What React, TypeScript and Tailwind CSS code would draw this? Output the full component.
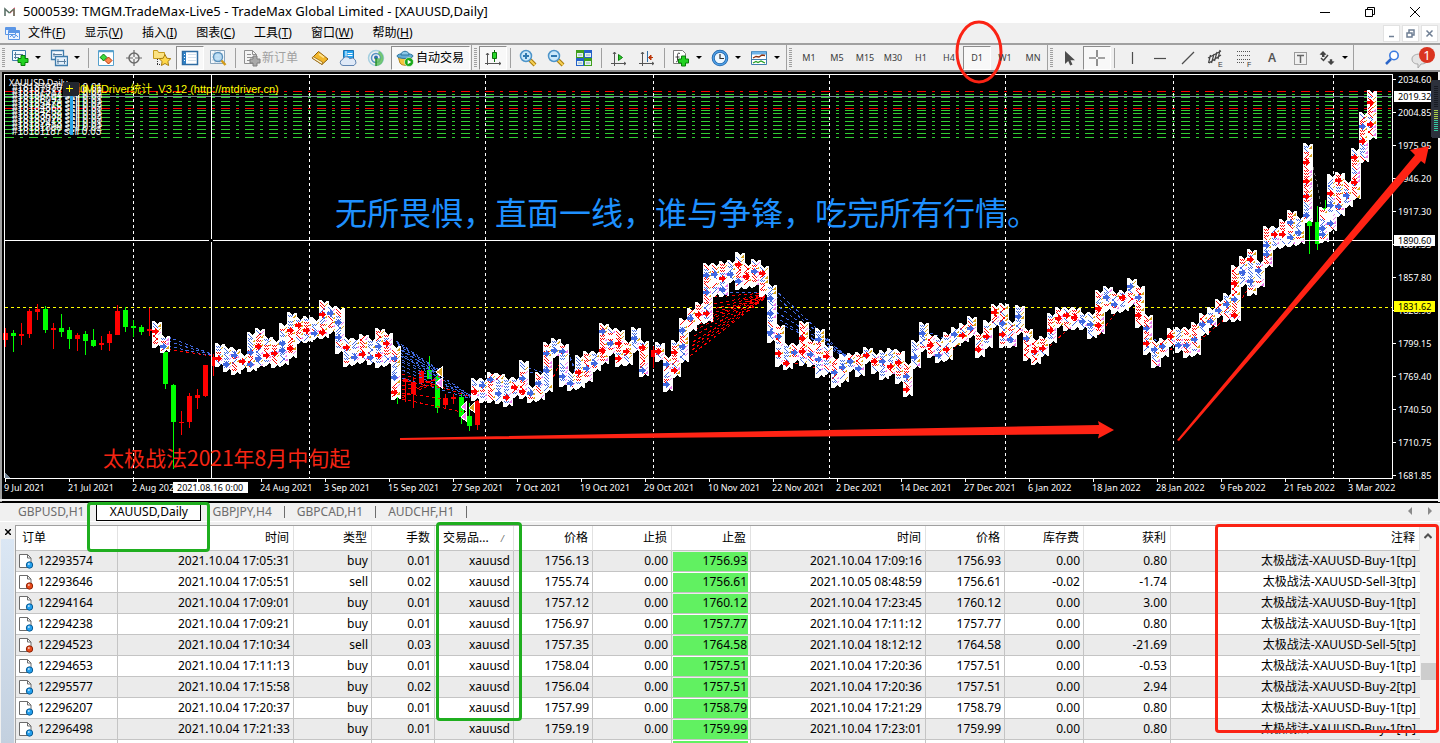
import type { ReactNode } from "react";

const FONT = "font-['Noto_Sans','Noto_Sans_CJK_SC',sans-serif]";

/* ---------- toolbar icons ---------- */

const Icon: React.FC<{ children: ReactNode }> = ({ children }) => (
  <svg width="18" height="18" viewBox="0 0 18 18" fill="none" className="shrink-0">
    {children}
  </svg>
);

const Plus: React.FC<{ x: number; y: number; fill?: string; line?: string }> = ({
  x,
  y,
  fill = "#22d322",
  line = "#0a7d0a",
}) => (
  <path
    d={`M${x + 3} ${y}h4v3h3v4h-3v3h-4v-3h-3v-4h3z`}
    fill={fill}
    stroke={line}
  />
);

const NewChartIcon = () => (
  <Icon>
    <path d="M1.5 1.500h13v10h-13z" fill="#f4f9ff" stroke="#3f7cac" />
    <path d="M4.5 3v7M3 5.500h9M3 8.500h5" stroke="#5b7f9f" />
    <Plus x={7} y={6.5} />
  </Icon>
);

const ProfilesIcon = () => (
  <Icon>
    <path d="M1.5 1.500h12v9h-12z" fill="#f4f9ff" stroke="#3f7cac" strokeWidth="1.300" />
    <path d="M5.500 7.500h12v9h-12z" fill="#e6f1fb" stroke="#3f7cac" strokeWidth="1.300" />
    <path d="M4 4v4M3 5.500h9M8 10v5M7 12.500h9M14.500 10v5" stroke="#5b7f9f" />
  </Icon>
);

const MarketIcon = () => (
  <Icon>
    <path d="M1.500 1.500h15v15h-15z" fill="#fff" stroke="#56a0cc" />
    <path d="M2 2.500h14" stroke="#56a0cc" strokeWidth="1.500" />
    <path d="M3 8.500l3.500-3.500 3.500 3.500-1.500 1.500-2 2-1.500-2z" fill="#3ddc3d" stroke="#0b7a0b" />
    <path d="M8 11.500l1.500-1.500 2-2 2 2 1.500 1.500-3.500 3.500z" fill="#ff8a4d" stroke="#b93205" />
  </Icon>
);

const CrosshairIcon = () => (
  <Icon>
    <circle cx="9" cy="9" r="5" stroke="#6a6a6a" strokeWidth="1.500" />
    <path d="M9 1v7M9 10v7M1 9h7M10 9h7" stroke="#6a6a6a" strokeWidth="1.200" />
  </Icon>
);

const FavoritesIcon = () => (
  <Icon>
    <path d="M.5 1.500h4l1 2h6v6H.5z" fill="#fbe281" stroke="#c39a1e" />
    <path d="M4.500 10v6M4 15.500h4" stroke="#333" strokeDasharray="1 1" />
    <path
      d="M12 5.500l1.800 3.700 4 .5-2.900 2.800.7 4-3.600-2-3.600 2 .7-4-2.900-2.800 4-.5z"
      fill="#ffd84a"
      stroke="#a87d10"
    />
  </Icon>
);

const TerminalIcon = () => (
  <Icon>
    <path d="M1.500 2.500h15v13h-15z" fill="#fff" stroke="#2f6ca3" strokeWidth="1.500" />
    <path d="M2 3h3v12H2z" fill="#2f7fc4" />
    <path d="M7 5.500h8M7 8.500h8M7 11.500h8" stroke="#d5e2ee" />
    <path d="M3 5.500h1M3 8.500h1M3 11.500h1" stroke="#fff" />
  </Icon>
);

const TesterIcon = () => (
  <Icon>
    <path d="M1.500 1.500h14v13h-14z" fill="#f3f8fc" stroke="#8ba5bb" />
    <path d="M3 5h11M3 8h10M3 11h10M6 2v12M11 2v12" stroke="#bccbd7" />
    <circle cx="9" cy="8" r="4.500" fill="#b5dcf6" fillOpacity=".8" stroke="#5a91bc" strokeWidth="1.400" />
    <path d="M12.500 11.500l4 4.500" stroke="#d29b1b" strokeWidth="2.500" />
  </Icon>
);

const OrderIcon = () => (
  <Icon>
    <path d="M1.500 1.500h8l4 4v9h-12z" fill="#f4f4f4" stroke="#8f8f8f" />
    <path d="M9.500 1.500v4h4M4 5.500h4M4 8.500h6M4 11.500h4" stroke="#8f8f8f" />
    <Plus x={7} y={7} fill="#a9a9a9" line="#7f7f7f" />
  </Icon>
);

const BookIcon = () => (
  <Icon>
    <path d="M7.500 2.500l9.500 7.500-6 5.500-10-6.500z" fill="#f2b72c" stroke="#8f5d09" />
    <path d="M1 9l10 6.500.5-2.500L2 7.500z" fill="#fff2c4" stroke="#8f5d09" strokeWidth=".7" />
    <path d="M8 5l5 3.500" stroke="#ffe28a" strokeWidth="2" />
  </Icon>
);

const VpsIcon = () => (
  <Icon>
    <path d="M4.500 1.500h10v10h-10z" fill="#29a3ee" stroke="#1674b5" />
    <path d="M7 2v8M8.500 4.500h5M8.500 6.500h5" stroke="#fff" />
    <path
      d="M4 16.500a3 3 0 01-.5-5.900 4 4 0 017.300-.9 3.400 3.400 0 014.200 6.800z"
      fill="#dfe9f7"
      stroke="#5f83b0"
    />
  </Icon>
);

const SignalIcon = () => (
  <Icon>
    <circle cx="9" cy="9" r="7.500" stroke="#a3cfe0" strokeWidth="1.500" />
    <circle cx="9" cy="9" r="4.500" stroke="#5694c4" strokeWidth="1.500" />
    <path d="M9 9v8c4 0 7.500-3 7.500-8 0-3-2-6-4.500-7l-1 2.500c2 1 3 3 2.500 5z" fill="#5fbf5f" fillOpacity=".85" />
    <circle cx="9" cy="8.500" r="2" fill="#2e6fae" />
    <path d="M9 9v8" stroke="#2b8f2b" strokeWidth="1.500" />
  </Icon>
);

const AutoTradeIcon = () => (
  <Icon>
    <path d="M2 7l2 7c2 3 8 3 10 0l2-7z" fill="#f3c53c" stroke="#b5851a" />
    <ellipse cx="9" cy="7" rx="8" ry="2.500" fill="#63acd6" stroke="#2e769f" />
    <path d="M5 6c0-5 8-5 8 0z" fill="#8cc8ea" stroke="#2e769f" />
    <circle cx="13" cy="13" r="4.500" fill="#18a818" stroke="#fff" strokeWidth=".6" />
    <path d="M11.700 10.800v4.400l3.600-2.200z" fill="#fff" />
  </Icon>
);

const CandleIcon = () => (
  <Icon>
    <path d="M3.500 4v12M1 14.500h16M2 6l1.500-2L5 6M15 13l2 1.500-2 1.500" stroke="#555" />
    <path d="M10.500 1v12" stroke="#0b6f0b" />
    <path d="M8.500 3.500h4v6h-4z" fill="#28d728" stroke="#0b6f0b" />
  </Icon>
);

const ZoomIcon: React.FC<{ plus?: boolean }> = ({ plus }) => (
  <Icon>
    <path d="M11 11l5 5" stroke="#a97b0d" strokeWidth="4" />
    <path d="M11 11l5 5" stroke="#f7d154" strokeWidth="2" />
    <circle cx="7" cy="7" r="5.500" fill="#cbe8fa" stroke="#4d94c9" strokeWidth="1.500" />
    <path d={plus ? "M4 7h6M7 4v6" : "M4 7h6"} stroke="#2f78b0" strokeWidth="2" />
  </Icon>
);

const TileIcon = () => (
  <Icon>
    <path d="M1 1h8v8H1zM9 9h8v8H9z" fill="#3f9f1d" />
    <path d="M9 1h8v8H9z" fill="#2461c9" />
    <path d="M1 9h8v8H1z" fill="#2461c9" />
    <path d="M2 4h6v4H2zM10 4h6v4h-6zM2 12h6v4H2zM10 12h6v4h-6z" fill="#e6f1ee" />
    <path d="M3 6h4M11 6h4M3 14h4M11 14h4" stroke="#8fb0c8" />
  </Icon>
);

const AutoScrollIcon = () => (
  <Icon>
    <path d="M4.500 3v14M1 14.500h15M3 5l1.500-2L6 5M14 13l2 1.500-2 1.500" stroke="#555" />
    <path d="M8.500 5.500l4 3-4 3z" fill="#28c828" stroke="#0b7f0b" />
  </Icon>
);

const ShiftIcon = () => (
  <Icon>
    <path d="M4.500 3v14M1 14.500h15M3 5l1.500-2L6 5M14 13l2 1.500-2 1.500" stroke="#555" />
    <path d="M9.500 2v11" stroke="#2f6ca3" />
    <path d="M15 8.500h-4M13 6l-2.500 2.500L13 11z" fill="#d2461a" stroke="#b93205" />
  </Icon>
);

const IndicatorIcon = () => (
  <Icon>
    <path d="M1.500 1.500h9l3 3v10h-12z" fill="#fff" stroke="#7d7d7d" />
    <path d="M8 4.500c-2-1-2.500 0-2.500 2v5c0 1-.5 1.500-1.500 1M3.500 8h4" stroke="#444" />
    <Plus x={6.5} y={7} />
  </Icon>
);

const ClockIcon = () => (
  <Icon>
    <circle cx="9" cy="9" r="6.800" fill="#eef7fe" stroke="#1e62a8" strokeWidth="3" />
    <circle cx="9" cy="9" r="6.800" stroke="#4f9fe4" strokeWidth="1.500" />
    <path d="M9 5v4.500h4" stroke="#333" strokeWidth="1.200" />
  </Icon>
);

const TemplateIcon = () => (
  <Icon>
    <path d="M1.500 2.500h15v13h-15z" fill="#fff" stroke="#3f7cac" />
    <path d="M2 4h14" stroke="#6db3e8" strokeWidth="3" />
    <path d="M3 9l3-1.500 3 .5 3-2 3 .5" stroke="#8b2f0d" strokeWidth="1.300" />
    <path d="M2 10.500h14" stroke="#3f7cac" />
    <path d="M3 14l3-1.500 2 1 3-1.500 4 2" stroke="#26a226" strokeWidth="1.300" />
  </Icon>
);

const CursorIcon = () => (
  <Icon>
    <path d="M5 2v13l3.200-3 2 4.500 2.300-1-2-4.300H15z" fill="#4d4d4d" />
  </Icon>
);

const LineIcon: React.FC<{ d: string }> = ({ d }) => (
  <Icon>
    <path d={d} stroke="#4d4d4d" strokeWidth="1.200" />
  </Icon>
);

const ChannelIcon = () => (
  <Icon>
    <path
      d="M1 9L14 2M2 14l12-8M3.500 6l-2 8M7 5l-2.500 9M10 3L7.500 12M13 1l-2 9"
      stroke="#444"
      strokeWidth="1.200"
    />
    <text x="11" y="18" fontSize="7" fill="#333" className="font-['Liberation_Sans',sans-serif]">E</text>
  </Icon>
);

const FiboIcon = () => (
  <Icon>
    <path d="M2 2.500h14M2 6.500h14M2 10.500h14M2 13.500h8" stroke="#555" strokeDasharray="1 1" />
    <text x="12" y="18" fontSize="7" fill="#333" className="font-['Liberation_Sans',sans-serif]">F</text>
  </Icon>
);

const LabelIcon = () => (
  <Icon>
    <path d="M3.500 3.500h12v12h-12z" stroke="#444" strokeDasharray="1 1" />
    <path d="M6 6.500h7M9.500 6v8" stroke="#666" strokeWidth="1.500" />
  </Icon>
);

const ShapesIcon = () => (
  <Icon>
    <path d="M5 2l3.500 3.500L6.500 6v2H4V6L1.500 5.500zM13 16l-3.500-3.500 2.300-.3v-2h2.400v2l2.300.3z" fill="#444" />
    <path d="M3 9l2.500 2.500L10 6" stroke="#444" strokeWidth="1.500" />
  </Icon>
);

const SearchIcon = () => (
  <Icon>
    <path d="M8 10l-5 5" stroke="#2b66c9" strokeWidth="2.500" />
    <circle cx="11" cy="6.500" r="4.200" fill="#fff" stroke="#3c7be0" strokeWidth="1.600" />
  </Icon>
);

/* ---------- toolbar parts ---------- */

const Tool: React.FC<{ label: string; pressed?: boolean; children: ReactNode }> = ({
  label,
  pressed,
  children,
}) => (
  <button
    aria-label={label}
    className={`relative flex h-6 w-7 shrink-0 items-center justify-center text-[9px] text-[#3c3c3c] ${
      pressed ? "border border-t-[#8c8c8c] border-r-white border-b-white border-l-[#8c8c8c] bg-[#f8f8f8]" : ""
    }`}
  >
    {children}
  </button>
);

const DropTool: React.FC<{ label: string; children: ReactNode }> = ({ label, children }) => (
  <button aria-label={label} className="flex h-6 w-[39px] shrink-0 items-center gap-1.5 pl-1">
    {children}
    <span className="h-0 w-0 border-x-3 border-t-3 border-x-transparent border-t-black" />
  </button>
);

const Separator = () => (
  <span className="mx-[3px] h-5 w-px shrink-0 bg-[#a0a0a0]" />
);

const Grip = () => (
  <span className="mx-[2px] h-5 w-[3px] shrink-0 bg-[repeating-linear-gradient(#a0a0a0_0_1px,#f0f0f0_1px_2px)]" />
);

const BarEnd = () => <span className="h-full w-px shrink-0 bg-[#a0a0a0]" />;

const TIMEFRAMES = ["M1", "M5", "M15", "M30", "H1", "H4", "D1", "W1", "MN"];

const Toolbar = () => (
  <div className="relative z-20 flex h-[29px] shrink-0 items-center border-y-2 border-t-[#a0a0a0] border-b-[#8a8a8a] bg-[#f0f0f0]">
    <Grip />
    <DropTool label="New chart"><NewChartIcon /></DropTool>
    <DropTool label="Profiles"><ProfilesIcon /></DropTool>
    <Separator />
    <Tool label="Market watch"><MarketIcon /></Tool>
    <Tool label="Data window"><CrosshairIcon /></Tool>
    <Tool label="Navigator"><FavoritesIcon /></Tool>
    <Tool label="Terminal" pressed><TerminalIcon /></Tool>
    <Tool label="Strategy tester"><TesterIcon /></Tool>
    <Separator />
    <button className="flex h-6 w-[67px] shrink-0 items-center gap-px pl-1 text-xs whitespace-nowrap text-[#a0a0a0]">
      <OrderIcon />
      新订单
    </button>
    <Tool label="MetaEditor"><BookIcon /></Tool>
    <Tool label="VPS"><VpsIcon /></Tool>
    <Tool label="Signals"><SignalIcon /></Tool>
    <button className="mx-px flex h-6 w-[79px] shrink-0 items-center gap-0.5 border border-t-[#8c8c8c] border-r-white border-b-white border-l-[#8c8c8c] bg-[#f8f8f8] pl-1 text-xs whitespace-nowrap text-black">
      <AutoTradeIcon />
      自动交易
    </button>
    <BarEnd />
    <Grip />
    <Tool label="Candlesticks" pressed><CandleIcon /></Tool>
    <Separator />
    <Tool label="Zoom in"><ZoomIcon plus /></Tool>
    <Tool label="Zoom out"><ZoomIcon /></Tool>
    <Tool label="Tile windows"><TileIcon /></Tool>
    <Separator />
    <Tool label="Auto scroll"><AutoScrollIcon /></Tool>
    <Tool label="Chart shift"><ShiftIcon /></Tool>
    <Separator />
    <DropTool label="Indicators"><IndicatorIcon /></DropTool>
    <DropTool label="Periods"><ClockIcon /></DropTool>
    <DropTool label="Templates"><TemplateIcon /></DropTool>
    <span className="w-px shrink-0" />
    <BarEnd />
    <Grip />
    <span className="w-px shrink-0" />
    {TIMEFRAMES.map((t) => (
      <Tool key={t} label={t} pressed={t === "D1"}>
        {t}
        {t === "D1" && (
          <svg
            width="50"
            height="66"
            viewBox="0 0 50 66"
            className="pointer-events-none absolute -top-7 -left-2.5 max-w-none"
          >
            <ellipse cx="25" cy="33" rx="22" ry="30" fill="none" stroke="#fb2314" strokeWidth="3" />
          </svg>
        )}
      </Tool>
    ))}
    <BarEnd />
    <Grip />
    <Tool label="Cursor"><CursorIcon /></Tool>
    <Tool label="Crosshair" pressed><LineIcon d="M9 1v7M9 10v7M1 9h7M10 9h7" /></Tool>
    <Separator />
    <Tool label="Vertical line"><LineIcon d="M9.500 3v12" /></Tool>
    <Tool label="Horizontal line"><LineIcon d="M3 9.500h12" /></Tool>
    <Tool label="Trendline"><LineIcon d="M3 15L15 3" /></Tool>
    <Tool label="Equidistant channel"><ChannelIcon /></Tool>
    <Tool label="Fibonacci"><FiboIcon /></Tool>
    <Tool label="Text"><span className="text-xs font-semibold text-[#555]">A</span></Tool>
    <Tool label="Text label"><LabelIcon /></Tool>
    <DropTool label="Arrows"><ShapesIcon /></DropTool>
    <BarEnd />
    <button aria-label="Search" className="ml-auto flex h-6 w-7 shrink-0 items-center justify-center">
      <SearchIcon />
    </button>
    <button aria-label="Notifications" className="mr-1 ml-1 shrink-0">
      <svg width="26" height="22" viewBox="0 0 26 22">
        <path d="M2 12c0-3 3-5 8-5s8 2 8 5-3 5-7 5l-3 4v-4c-4 0-6-2-6-5z" fill="#e4e4e4" stroke="#a8a8a8" />
        <circle cx="17" cy="8" r="8" fill="#da3420" />
        <text x="17" y="13" fontSize="13" fill="#fff" textAnchor="middle">1</text>
      </svg>
    </button>
  </div>
);

/* ---------- title and menu ---------- */

const MENU = [
  ["文件", "F"],
  ["显示", "V"],
  ["插入", "I"],
  ["图表", "C"],
  ["工具", "T"],
  ["窗口", "W"],
  ["帮助", "H"],
];

const TitleBar = () => (
  <header className="flex h-[23px] shrink-0 items-center bg-white pl-1 text-[13px] text-black">
    <svg width="11" height="10" viewBox="0 0 11 10" className="mr-2 shrink-0" fill="none">
      <path d="M1 9V2l4.500 4" stroke="#5c7168" strokeWidth="1.600" />
      <path d="M10 9V2L5.500 6" stroke="#b8324a" strokeWidth="1.600" />
      <path d="M5 6l5-4v7" stroke="#3f9a68" strokeWidth="1" />
    </svg>
    <h1 className="grow whitespace-nowrap">
      5000539: TMGM.TradeMax-Live5 - TradeMax Global Limited - [XAUUSD,Daily]
    </h1>
    <div className="flex gap-[35px] pr-5">
      <button aria-label="Minimize">
        <svg width="10" height="10"><path d="M0 5.500h10" stroke="#000" /></svg>
      </button>
      <button aria-label="Restore">
        <svg width="10" height="10" fill="none" stroke="#000">
          <path d="M.5 2.500h7v7h-7zM2.500 2.500v-2h7v7h-2" />
        </svg>
      </button>
      <button aria-label="Close">
        <svg width="10" height="10" stroke="#000"><path d="M0 0l10 10M10 0L0 10" /></svg>
      </button>
    </div>
  </header>
);

const MdiButton: React.FC<{ label: string; d: string }> = ({ label, d }) => (
  <button aria-label={label} className="flex h-[17px] w-[17px] items-center justify-center border border-[#e2e2e2] bg-white">
    <svg width="9" height="9" viewBox="0 0 9 9" fill="none" stroke="#6f7f94" strokeWidth="1.500">
      <path d={d} />
    </svg>
  </button>
);

const MenuBar = () => (
  <nav className="flex h-5 shrink-0 items-center bg-[#f0f0f0] pl-[5px] text-xs text-black">
    <svg width="15" height="14" viewBox="0 0 15 14" fill="none" className="mr-2 shrink-0" stroke="#5b96e6">
      <path d="M.5 1.500h10v7h-10zM3.500 4.500h11v9h-11z" fill="#eef5ff" />
      <path d="M1 3h9M4 6h10" strokeWidth="2" />
      <path d="M5 11l2-2 2 3 2-3 2 2" />
    </svg>
    <div className="flex grow gap-[19px]">
      {MENU.map(([name, key]) => (
        <button key={key} className="whitespace-nowrap">
          {name}(<u>{key}</u>)
        </button>
      ))}
    </div>
    <div className="flex gap-0.5 pr-0.5">
      <MdiButton label="Minimize chart" d="M2 7.500h5" />
      <MdiButton label="Restore chart" d="M1 4h5v4H1zM3 4V1h5v5H6" />
      <MdiButton label="Close chart" d="M1.500 1.500l6 6M7.500 1.500l-6 6" />
    </div>
  </nav>
);

/* ---------- chart ---------- */

const RED = "#ff0000";
const LIME = "#00ff00";
const ARROW_BLUE = "#4169e1";

// x, high, low, body top, body bottom, colour
const CANDLES: [number, number, number, number, number, string][] = [
  [5, 328, 347, 333, 340, RED],
  [13, 330, 352, 333, 336, LIME],
  [21, 323, 345, 334, 336, RED],
  [29, 309, 338, 311, 334, RED],
  [37, 304, 320, 309, 312, RED],
  [45, 306, 333, 309, 330, LIME],
  [53, 323, 349, 328, 330, RED],
  [61, 314, 337, 328, 332, LIME],
  [69, 327, 349, 330, 339, LIME],
  [77, 333, 351, 335, 339, RED],
  [85, 331, 355, 334, 341, LIME],
  [93, 329, 347, 340, 346, LIME],
  [101, 336, 350, 343, 345, RED],
  [109, 331, 351, 334, 343, RED],
  [117, 305, 335, 311, 335, RED],
  [125, 307, 332, 310, 327, LIME],
  [133, 320, 337, 326, 328, LIME],
  [141, 325, 335, 327, 332, LIME],
  [149, 308, 336, 329, 331, RED],
  [165, 352, 389, 352, 384, LIME],
  [173, 384, 469, 385, 422, LIME],
  [181, 411, 435, 422, 423, RED],
  [189, 393, 428, 396, 422, RED],
  [197, 389, 409, 395, 398, RED],
  [205, 365, 397, 365, 396, RED],
  [213, 354, 376, 357, 366, RED],
  [397, 395, 404, 396, 398, LIME],
  [405, 378, 402, 379, 382, RED],
  [413, 378, 408, 382, 394, RED],
  [421, 370, 384, 371, 383, RED],
  [429, 356, 379, 370, 379, LIME],
  [437, 368, 413, 377, 408, LIME],
  [445, 394, 409, 398, 405, RED],
  [453, 394, 404, 397, 399, RED],
  [461, 394, 424, 397, 417, LIME],
  [469, 403, 431, 416, 426, LIME],
  [477, 400, 430, 401, 425, RED],
  [653, 346, 368, 350, 357, RED],
  [1309, 220, 254, 221, 226, LIME],
  [1317, 206, 250, 222, 244, LIME],
  [1325, 200, 212, 208, 210, LIME],
];

// runs of trade-marker columns, 8 units apart: start x, then top / bottom of each
const MARKER_RUNS: { x: number; cols: [number, number][] }[] = [
  { x: 152, cols: [[321, 348], [335, 353]] },
  {
    x: 215,
    cols: [
      [343, 367], [346, 372], [348, 375], [353, 370], [332, 372], [328, 368], [336, 366], [339, 368],
      [323, 366], [312, 359], [317, 344], [316, 343], [318, 340], [300, 339], [305, 334], [307, 354],
      [337, 367], [338, 365], [334, 363], [338, 365], [328, 368], [332, 366], [345, 400],
    ],
  },
  {
    x: 471,
    cols: [
      [378, 401], [378, 403], [372, 403], [373, 404], [377, 407], [377, 398], [360, 399], [385, 403],
      [372, 401], [342, 393], [338, 358], [343, 387], [371, 391], [355, 389], [351, 383], [351, 372],
      [323, 365], [327, 356], [329, 367], [340, 366], [327, 353], [340, 377],
    ],
  },
  {
    x: 655,
    cols: [
      [342, 362], [355, 392], [340, 378], [318, 363], [308, 332], [302, 325], [263, 323], [263, 297],
      [261, 297], [260, 283], [252, 290], [263, 289], [259, 287], [265, 297], [284, 343], [324, 367],
      [343, 370], [343, 363], [321, 366], [339, 367], [328, 378], [345, 375], [357, 388], [354, 383],
      [353, 372], [352, 377], [347, 364], [352, 374], [350, 380], [348, 376], [350, 384], [362, 397],
      [340, 369], [322, 352], [334, 358], [337, 363], [332, 361], [327, 347], [323, 343], [316, 338],
      [332, 358], [320, 349], [304, 328], [303, 348], [320, 348], [305, 335], [328, 361], [338, 365],
      [336, 357], [313, 344], [307, 328], [307, 331], [307, 330], [312, 330], [312, 339], [290, 335],
      [286, 312], [291, 314], [290, 312], [278, 307], [285, 328], [314, 355], [340, 368], [338, 358],
      [328, 347], [327, 353], [327, 358], [322, 356], [313, 336], [307, 328], [299, 318], [293, 322],
      [265, 322], [256, 287], [249, 296], [260, 288], [226, 268], [226, 250], [219, 248], [210, 247],
      [216, 245], [143, 223],
    ],
  },
  { x: 1319, cols: [[207, 243], [174, 232], [172, 217], [180, 208], [148, 200], [112, 163], [90, 140]] },
];

const random = (seed: number) => {
  let s = seed;
  return () => {
    s = (s * 1103515245 + 12345) % 2147483648;
    return s / 2147483648;
  };
};

const dot = (x: number, y: number) => `M${x} ${y}h1v1h-1z`;

const arrow = (x: number, y: number) =>
  `M${x} ${y + 2}h3v-2h1v1h1v1h1v1h1v1h-1v1h-1v1h-1v1h-1v-2h-3z`;

const MarkerColumn: React.FC<{ x: number; top: number; bottom: number }> = ({ x, top, bottom }) => {
  const rnd = random(x * 131 + top * 17 + 7);
  const paths = { blue: "", red: "", gold: "", violet: "" };
  let tone: "blue" | "red" = rnd() > 0.45 ? "blue" : "red";
  for (let y = top + 3; y < bottom - 5; y += 3) {
    if (rnd() > 0.7) tone = tone === "blue" ? "red" : "blue";
    const kind = rnd();
    for (let j = 0; j < 5; j++) {
      if (kind < 0.45) paths[tone] += dot(x + 1 + j, y + (j % 2));
      else if (kind < 0.75) paths[tone] += dot(x + 1 + j, y + j - 1);
      else if (kind < 0.93) paths[tone] += dot(x + 1 + j, y + 3 - j);
    }
  }
  for (let y = top + 3; y < bottom - 4; y += 4) {
    const side = rnd() > (y - top) / (bottom - top) ? "gold" : "violet";
    if (rnd() > 0.3) {
      paths[side] += dot(x + 6, y + 2) + dot(x + 7, y + 1) + dot(x + 8, y);
      if (rnd() > 0.5) paths[side] += dot(x + 7, y + 2) + dot(x + 8, y + 1) + dot(x + 8, y + 2);
    }
  }
  const marks: { d: string; fill: string }[] = [];
  for (let y = top + 4; y < bottom - 10; y += 20) {
    const room = Math.min(14, bottom - 10 - y);
    marks.push({
      d: arrow(x, Math.round(y + rnd() * room)),
      fill: rnd() > 0.5 ? ARROW_BLUE : RED,
    });
  }
  return (
    <>
      <path d={`M${x} ${top}h2l3 3 2-2h3V${bottom - 1}h-2l-2-2-3 3h-3z`} fill="#fff" />
      <path d={paths.blue} fill={ARROW_BLUE} />
      <path d={paths.red} fill={RED} />
      <path d={paths.gold} fill="#daa520" />
      <path d={paths.violet} fill="#ee82ee" />
      {marks.map((m) => (
        <path key={m.d} d={m.d} fill={m.fill} />
      ))}
    </>
  );
};

// dashed order connections: x1, y1, x2, y2
const BLUE_LINKS = [
  [168, 337, 211, 354], [168, 341, 211, 355], [168, 346, 211, 356],
  [396, 341, 442, 372], [397, 343, 442, 373], [398, 345, 442, 374], [400, 350, 440, 374],
  [400, 353, 440, 376], [400, 356, 440, 374], [402, 360, 440, 378],
  [402, 350, 471, 396], [402, 356, 471, 396], [402, 362, 471, 397], [402, 366, 471, 397],
  [402, 370, 470, 398], [402, 378, 471, 399],
  [528, 368, 548, 374], [530, 372, 548, 378], [568, 352, 578, 376], [570, 358, 578, 380],
  [770, 285, 850, 360], [775, 296, 850, 360], [775, 304, 850, 360], [776, 312, 850, 358],
  [780, 320, 850, 360], [785, 326, 848, 356],
  [712, 293, 765, 292], [930, 333, 943, 338], [1150, 335, 1162, 346],
];

const RED_LINKS = [
  [168, 349, 211, 356], [402, 398, 440, 376], [402, 386, 436, 380], [402, 390, 438, 384],
  [402, 380, 440, 388], [402, 393, 450, 400], [402, 396, 445, 380],
  [402, 399, 462, 412], [402, 374, 471, 397], [551, 382, 565, 352],
  [690, 356, 765, 298], [692, 350, 765, 298], [692, 346, 765, 297], [693, 342, 765, 297],
  [694, 336, 765, 296], [695, 330, 765, 296], [700, 324, 765, 295], [703, 320, 765, 295],
  [705, 316, 765, 295], [710, 310, 765, 294],
  [714, 304, 765, 294], [714, 297, 765, 293], [795, 363, 826, 370], [943, 360, 962, 340],
  [1050, 346, 1066, 331], [1099, 335, 1116, 312], [1167, 355, 1182, 335], [1199, 341, 1226, 318],
  [1236, 308, 1250, 286],
];

const GRID_X = [133, 309, 485, 653, 829, 1005, 1173, 1333];
const ORDER_Y = [94, 97, 101, 105, 110, 113, 117, 121, 125, 129, 133, 137];

const PRICES = [
  "2034.60", "2004.85", "1975.95", "1946.20", "1917.30", "1887.55", "1857.80",
  "1828.90", "1799.15", "1769.40", "1740.50", "1710.75", "1681.85",
];

const DATES = [
  "9 Jul 2021", "21 Jul 2021", "2 Aug 2021", "12 Aug 2021", "24 Aug 2021", "3 Sep 2021",
  "15 Sep 2021", "27 Sep 2021", "7 Oct 2021", "19 Oct 2021", "29 Oct 2021", "10 Nov 2021",
  "22 Nov 2021", "2 Dec 2021", "14 Dec 2021", "27 Dec 2021", "6 Jan 2022", "18 Jan 2022",
  "28 Jan 2022", "9 Feb 2022", "21 Feb 2022", "3 Mar 2022",
];

const PriceTag: React.FC<{ y: number; fill: string; text: string }> = ({ y, fill, text }) => (
  <>
    <rect x="1394" y={y} width="41" height="11" fill={fill} />
    <text x="1398" y={y + 9} fill="#000">{text}</text>
  </>
);

// user units equal window coordinates at the default width
const Chart = () => (
  <svg
    viewBox="0 72 1440 430"
    className="block w-full shrink-0 bg-black"
    fontSize="9"
    shapeRendering="crispEdges"
    role="img"
    aria-label="XAUUSD daily chart"
  >
    <path d="M0 72h2v430H0z" fill="#a0a0a0" />
    <path d="M1438 72h2v430h-2zM0 499h1440v2H0z" fill="#f0f0f0" />

    {ORDER_Y.map((y) => (
      <path key={y} d={`M5 ${y + 0.5}H1392`} stroke="#32cd32" strokeDasharray="9 6 3 6" />
    ))}
    <path d="M5 91.500H1392M5 108.500H1392" stroke={RED} strokeDasharray="9 6 3 6" />
    <path d="M5 96.500H1392" stroke="#778899" />

    {GRID_X.map((x) => (
      <path key={x} d={`M${x + 0.5} 75V478`} stroke="#fff" strokeDasharray="3 3" />
    ))}
    <path d="M5 307.500H1392" stroke="#ffff00" strokeDasharray="3 3" />

    {CANDLES.map(([x, high, low, top, bottom, color]) => (
      <g key={x} fill={color}>
        <rect x={x} y={high} width="1" height={low - high} />
        <rect x={x - 2} y={top} width="5" height={bottom - top} />
      </g>
    ))}

    <g strokeDasharray="3 3">
      {BLUE_LINKS.map(([x1, y1, x2, y2]) => (
        <path key={`${x1}-${y1}-${y2}`} d={`M${x1} ${y1}L${x2} ${y2}`} stroke={ARROW_BLUE} />
      ))}
      {RED_LINKS.map(([x1, y1, x2, y2]) => (
        <path key={`${x1}-${y1}-${y2}`} d={`M${x1} ${y1}L${x2} ${y2}`} stroke={RED} />
      ))}
      <path d="M1311 155L1321 204" stroke="#696969" />
    </g>

    {MARKER_RUNS.map((run) =>
      run.cols.map(([top, bottom], i) => (
        <MarkerColumn key={run.x + i * 8} x={run.x + i * 8} top={top} bottom={bottom} />
      )),
    )}
    <path d="M442 367v10l-6-5zM474 403v9l-5-4z" fill="#daa520" stroke="#fff" />
    <path d="M442 378v10l-6-5zM466 402v9l-5-4zM466 412v9l-5-4z" fill="#ee82ee" stroke="#fff" />

    <path d="M4.500 478V74.500H1392.500V478.500H4.500" fill="none" stroke="#fff" />
    <path d="M5 240.500H1392M211.500 75V478" stroke="#fff" />
    <rect x="209" y="239" width="4" height="3" fill="#000" />
    <path d="M5 473l6 5H5z" fill="#778899" />

    {PRICES.map((p, i) => (
      <g key={p}>
        <path d={`M1393 ${79.5 + i * 33}h3`} stroke="#fff" />
        <text x="1398" y={83 + i * 33} fill="#fff">{p}</text>
      </g>
    ))}
    <PriceTag y={91} fill="#fff" text="2019.32" />
    <PriceTag y={235} fill="#fff" text="1890.60" />
    <PriceTag y={301} fill="#ffff00" text="1831.62" />

    {DATES.map((d, i) => (
      <g key={d}>
        <path d={`M${5.5 + i * 64} 479v3`} stroke="#fff" />
        <text x={4 + i * 64} y="491" fill="#fff">{d}</text>
      </g>
    ))}
    <rect x="173" y="482" width="75" height="11" fill="#fff" />
    <text x="177" y="491" fill="#000">2021.08.16 0:00</text>

    <g fill="#fff">
      <text x="9" y="86">XAUUSD,Daily</text>
      {Array.from({ length: 12 }, (_, i) => (
        <text key={i} x="12" y={91 + i * 4} fontSize="10" className="font-['Liberation_Sans',sans-serif]">
          {`#1818${7930 - i * 613} sell 0.0${(i % 3) + 1}`}
        </text>
      ))}
    </g>
    <path d="M70 92h3v43h-3z" fill="#2aa4e8" />
    <rect x="63" y="82" width="16" height="14" rx="2" fill="#22262e" />
    <path d="M66 88.500h7M69.500 85v7" stroke="#ffff00" />
    <text x="80" y="93" fontSize="11" fill="#ffff00" className="font-['Liberation_Sans','Noto_Sans_CJK_SC',sans-serif]">
      0
    </text>
    <text x="85" y="93" fontSize="11" fill="#ffff00" className="font-['Liberation_Sans','Noto_Sans_CJK_SC',sans-serif]">
      MTDriver统计 ,V3.12 (http://mtdriver.cn)
    </text>

    <text x="335" y="225" fontSize="32" fill="#1e90ff" className="font-['Noto_Sans_CJK_SC',sans-serif]">
      无所畏惧，直面一线，谁与争锋，吃完所有行情。
    </text>
    <text x="103" y="466" fontSize="21" fill="#f52413" className="font-['Noto_Sans_CJK_SC',sans-serif]">
      太极战法2021年8月中旬起
    </text>

    <g fill="#ff2314" shapeRendering="auto">
      <path d="M400 438L1099 425 1098 421 1114 430 1098 438.500 1099 434 400 440z" />
      <path d="M1177 440L1415 155 1410 150 1429 146 1425 164 1421 161 1179 441z" />
    </g>

    <rect x="1431" y="80" width="12" height="58" rx="3" fill="#2d313c" />
    <path d="M1436 86v22" stroke="#171a22" strokeWidth="4" strokeDasharray="1 1" />
    <path d="M1436 110v10" stroke="#a8cf4a" strokeWidth="4" strokeDasharray="1 1" />
    <path d="M1436 120v12" stroke="#35c8a0" strokeWidth="4" strokeDasharray="1 1" />
  </svg>
);

/* ---------- chart tabs ---------- */

const TabButton: React.FC<{ name: string; last?: boolean }> = ({ name, last }) => (
  <button className="flex h-[18px] items-center gap-3 pr-3">
    {name}
    {!last && <span className="h-3 w-px bg-[#6d6d6d]" />}
  </button>
);

const ChartTabs = () => (
  <div className="relative flex h-5 shrink-0 items-start border-t border-b border-t-black border-b-white bg-[#f0f0f0] pl-[18px] text-xs text-[#6d6d6d]">
    <TabButton name="GBPUSD,H1" last />
    <button className="mr-[11px] h-[18px] w-[105px] border border-t-0 border-black bg-white leading-4 text-black">
      XAUUSD,Daily
    </button>
    <TabButton name="GBPJPY,H4" />
    <TabButton name="GBPCAD,H1" />
    <TabButton name="AUDCHF,H1" />
    <div className="ml-auto flex gap-4 pt-1 pr-2">
      <span className="h-0 w-0 border-y-4 border-r-4 border-y-transparent border-r-[#8a8a8a]" />
      <span className="h-0 w-0 border-y-4 border-l-4 border-y-transparent border-l-[#8a8a8a]" />
    </div>
    <span className="pointer-events-none absolute -top-px left-[87px] z-10 h-[50px] w-[123px] rounded-sm border-3 border-[#1fae1f]" />
  </div>
);

/* ---------- orders table ---------- */

type Order = {
  id: string;
  open: string;
  type: "buy" | "sell";
  lots: string;
  price: string;
  tp: string;
  close: string;
  swap: string;
  profit: string;
  note: string;
};

const order = (
  id: string,
  open: string,
  type: "buy" | "sell",
  lots: string,
  price: string,
  tp: string,
  close: string,
  swap: string,
  profit: string,
  note: string,
): Order => ({ id, open, type, lots, price, tp, close, swap, profit, note });

const ORDERS: Order[] = [
  order("12293574", "2021.10.04 17:05:31", "buy", "0.01", "1756.13", "1756.93", "2021.10.04 17:09:16", "0.00", "0.80", "Buy-1"),
  order("12293646", "2021.10.04 17:05:51", "sell", "0.02", "1755.74", "1756.61", "2021.10.05 08:48:59", "-0.02", "-1.74", "Sell-3"),
  order("12294164", "2021.10.04 17:09:01", "buy", "0.01", "1757.12", "1760.12", "2021.10.04 17:23:45", "0.00", "3.00", "Buy-1"),
  order("12294238", "2021.10.04 17:09:21", "buy", "0.01", "1756.97", "1757.77", "2021.10.04 17:11:12", "0.00", "0.80", "Buy-1"),
  order("12294523", "2021.10.04 17:10:34", "sell", "0.03", "1757.35", "1764.58", "2021.10.04 18:12:12", "0.00", "-21.69", "Sell-5"),
  order("12294653", "2021.10.04 17:11:13", "buy", "0.01", "1758.04", "1757.51", "2021.10.04 17:20:36", "0.00", "-0.53", "Buy-1"),
  order("12295577", "2021.10.04 17:15:58", "buy", "0.02", "1756.04", "1757.51", "2021.10.04 17:20:36", "0.00", "2.94", "Buy-2"),
  order("12296207", "2021.10.04 17:20:37", "buy", "0.01", "1757.99", "1758.79", "2021.10.04 17:21:29", "0.00", "0.80", "Buy-1"),
  order("12296498", "2021.10.04 17:21:33", "buy", "0.01", "1759.19", "1759.99", "2021.10.04 17:23:01", "0.00", "0.80", "Buy-1"),
];

const HEADERS = [
  "订单", "时间", "类型", "手数", "交易品...", "价格", "止损", "止盈", "时间", "价格", "库存费", "获利", "注释",
];

const DocIcon: React.FC<{ type: "buy" | "sell" }> = ({ type }) => (
  <svg width="15" height="16" viewBox="0 0 15 16" fill="none" className="shrink-0">
    <path d="M.5 1.500h8l3.500 3.500v9.500H.5z" fill="#fff" stroke="#6b6b6b" />
    <path d="M8.500 1.500v3.500h3.500" stroke="#6b6b6b" />
    <circle
      cx="10.500"
      cy="12"
      r="3.200"
      fill={type === "buy" ? "#24a0ee" : "#e84a1c"}
      stroke={type === "buy" ? "#0b5c94" : "#8f2506"}
    />
    <circle cx="9.800" cy="11" r="1" fill="#fff" fillOpacity=".7" />
  </svg>
);

const Cell: React.FC<{ children?: ReactNode }> = ({ children }) => (
  <td className="border-r border-b border-[#c4c4c4] pr-[3px] text-right">{children}</td>
);

const Orders = () => (
  <section className="relative flex min-h-0 grow bg-[#f0f0f0] pt-[3px]">
    <div className="flex w-[15px] shrink-0 flex-col">
      <button aria-label="Close terminal" className="flex h-[14px] items-center justify-center">
        <svg width="6" height="6" stroke="#000" strokeWidth="1.500"><path d="M0 0l6 6M6 0L0 6" /></svg>
      </button>
      <div className="mr-px ml-px grow bg-linear-to-b from-[#dbe7f4] to-[#c3d0df]" />
    </div>
    <div className="min-w-0 grow overflow-hidden border-t border-l border-[#a0a0a0] bg-white">
      <table className="w-full table-fixed border-separate border-spacing-0 text-xs text-black">
        <colgroup>
          <col className="w-[102px]" />
          <col className="w-[176px]" />
          <col className="w-[78px]" />
          <col className="w-[63px]" />
          <col className="w-[79px]" />
          <col className="w-[79px]" />
          <col className="w-[79px]" />
          <col className="w-[79px]" />
          <col className="w-[175px]" />
          <col className="w-[79px]" />
          <col className="w-[79px]" />
          <col className="w-[87px]" />
          <col />
        </colgroup>
        <thead>
          <tr className="h-[25px]">
            {HEADERS.map((h, i) => (
              <th
                key={i}
                className={`border-r border-b border-r-[#e2e2e2] border-b-[#c4c4c4] p-0 font-normal whitespace-nowrap ${
                  i === 0 ? "pl-1.5 text-left" : i === 4 ? "pl-2 text-left" : "pr-1 text-right"
                }`}
              >
                {h}
                {i === 4 && <span className="ml-3 text-[9px] text-[#6d6d6d] italic">/</span>}
              </th>
            ))}
          </tr>
        </thead>
        <tbody>
          {ORDERS.map((o) => (
            <tr key={o.id} className="h-[21px] leading-5 odd:bg-[#ebebeb]">
              <td className="border-r border-b border-[#c4c4c4] p-0">
                <div className="flex h-5 items-center gap-1 pl-[3px]">
                  <DocIcon type={o.type} />
                  {o.id}
                </div>
              </td>
              <Cell>{o.open}</Cell>
              <Cell>{o.type}</Cell>
              <Cell>{o.lots}</Cell>
              <Cell>xauusd</Cell>
              <Cell>{o.price}</Cell>
              <Cell>0.00</Cell>
              <td className="border-r border-b border-[#c4c4c4] p-0 text-right">
                <div className="mr-0.5 ml-px h-[19px] bg-[#61f161] pr-px leading-[18px]">{o.tp}</div>
              </td>
              <Cell>{o.close}</Cell>
              <Cell>{o.tp}</Cell>
              <Cell>{o.swap}</Cell>
              <Cell>{o.profit}</Cell>
              <td className="border-b border-[#c4c4c4] pr-1 text-right whitespace-nowrap">
                太极战法-XAUUSD-{o.note}[tp]
              </td>
            </tr>
          ))}
          <tr className="h-[21px]">
            {HEADERS.map((_, i) => (
              <td key={i} className={`border-r border-[#c4c4c4] p-0 ${i === 12 ? "border-r-0" : ""}`}>
                {i === 7 && <div className="mr-0.5 ml-px h-[19px] bg-[#61f161]" />}
              </td>
            ))}
          </tr>
        </tbody>
      </table>
    </div>
    <div className="mr-1 flex w-4 shrink-0 flex-col items-center pt-2">
      <svg width="8" height="6" viewBox="0 0 8 6" fill="none" stroke="#505050" strokeWidth="2">
        <path d="M.5 5L4 1.500 7.500 5" />
      </svg>
      <span className="mt-[124px] h-[17px] w-[15px] bg-[#cdcdcd]" />
    </div>
    <span className="pointer-events-none absolute top-0 left-[436px] h-[199px] w-[86px] rounded-sm border-3 border-[#1fae1f]" />
    <span className="pointer-events-none absolute top-0.5 right-px h-[209px] w-[224px] rounded-sm border-3 border-[#fb2314]" />
  </section>
);

const App = () => (
  <div className={`flex h-screen flex-col overflow-hidden bg-[#f0f0f0] ${FONT}`}>
    <TitleBar />
    <MenuBar />
    <Toolbar />
    <Chart />
    <ChartTabs />
    <Orders />
  </div>
);

export default App;
